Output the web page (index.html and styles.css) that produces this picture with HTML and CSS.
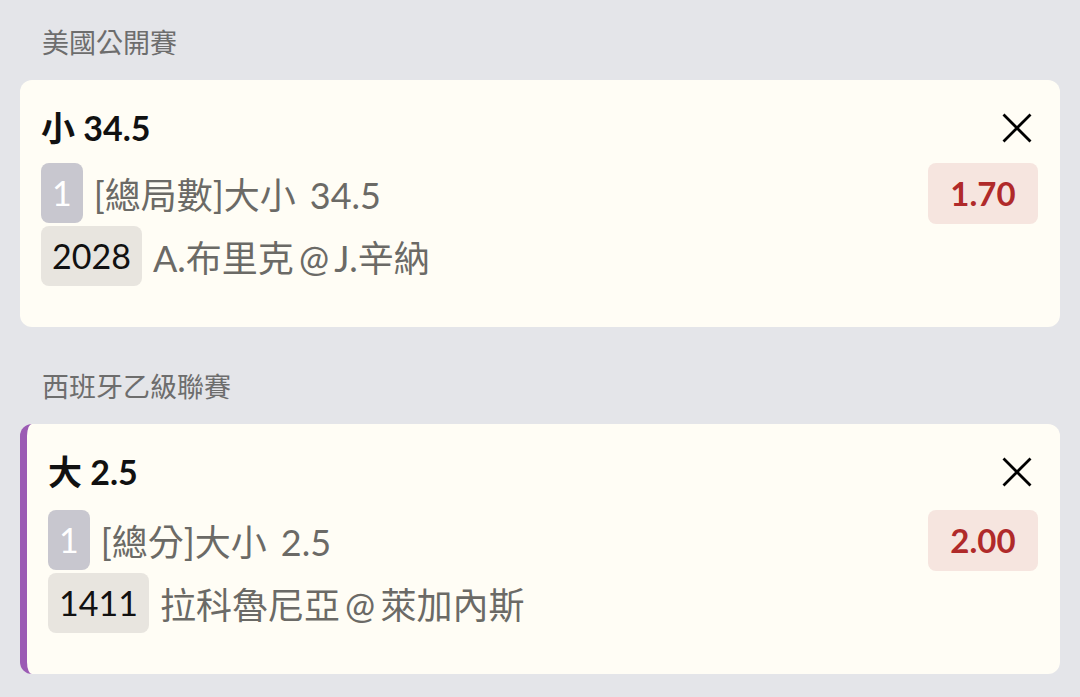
FILE: index.html
```html
<!DOCTYPE html>
<html lang="zh-Hant">
<head>
    <meta charset="UTF-8">
    <meta name="viewport" content="width=device-width, initial-scale=1.0">
    <title>投注單</title>
    <link rel="stylesheet" href="styles.css">
</head>
<body>
    <section class="league">
        <h2 class="league-name">美國公開賽</h2>
        <div class="bet-card">
            <div class="bet-head">
                <h3 class="bet-title">小 34.5</h3>
                <button class="close-button" title="移除">
                    <svg width="30" height="30" viewBox="0 0 30 30"><path d="M1.5 1.5 L28.5 28.5 M28.5 1.5 L1.5 28.5" stroke="#000" stroke-width="2.8" fill="none"/></svg>
                </button>
            </div>
            <div class="bet-body">
                <div class="bet-lines">
                    <div class="bet-line"><span class="tag tag-leg">1</span><span class="line-text">[總局數]大小<span class="line-value">34.5</span></span></div>
                    <div class="bet-line"><span class="tag tag-match">2028</span><span class="line-text">A.布里克 @ J.辛納</span></div>
                </div>
                <div class="odds">1.70</div>
            </div>
        </div>
    </section>

    <section class="league">
        <h2 class="league-name">西班牙乙級聯賽</h2>
        <div class="bet-card live">
            <div class="bet-head">
                <h3 class="bet-title">大 2.5</h3>
                <button class="close-button" title="移除">
                    <svg width="30" height="30" viewBox="0 0 30 30"><path d="M1.5 1.5 L28.5 28.5 M28.5 1.5 L1.5 28.5" stroke="#000" stroke-width="2.8" fill="none"/></svg>
                </button>
            </div>
            <div class="bet-body">
                <div class="bet-lines">
                    <div class="bet-line"><span class="tag tag-leg">1</span><span class="line-text">[總分]大小<span class="line-value">2.5</span></span></div>
                    <div class="bet-line"><span class="tag tag-match">1411</span><span class="line-text">拉科魯尼亞 @ 萊加內斯</span></div>
                </div>
                <div class="odds">2.00</div>
            </div>
        </div>
    </section>
</body>
</html>
```

FILE: styles.css
```css
/* Page */
body {
    font-family: "Lato", "Noto Sans CJK TC", sans-serif;
    background-color: #e4e5e9;
    color: #111;
    margin: 0;
    padding: 27px 20px 0;
}

/* League group */
.league + .league {
    margin-top: 44px;
}

.league-name {
    font-size: 27px;
    line-height: 32px;
    font-weight: 400;
    color: #6d6d6d;
    margin: 0 0 21px 22px;
}

/* Bet card */
.bet-card {
    background-color: #fffdf5;
    border-radius: 12px;
    padding: 28px 22px 41px 21px;
}

.bet-card.live {
    border-left: 7px solid #9b5bb4;
    padding-left: 21px;
}

.bet-head {
    display: flex;
    justify-content: space-between;
    align-items: center;
    height: 40px;
    margin-bottom: 15px;
}

.bet-card.live .bet-head {
    margin-bottom: 18px;
}

.bet-title {
    font-size: 34px;
    line-height: 40px;
    font-weight: 700;
    margin: 0;
}

.close-button {
    background: none;
    border: none;
    padding: 0;
    margin-right: 6px;
    width: 30px;
    height: 30px;
    cursor: pointer;
}

.close-button svg {
    display: block;
}

.bet-body {
    display: flex;
    justify-content: space-between;
    align-items: flex-start;
}

.bet-lines {
    display: flex;
    flex-direction: column;
    gap: 3px;
}

.bet-line {
    display: flex;
    align-items: center;
    gap: 11px;
    height: 60px;
    font-size: 34px;
}

.line-text {
    font-size: 36px;
    color: #6b6a66;
    white-space: nowrap;
    word-spacing: -4px;
}

.line-value {
    margin-left: 14px;
}

/* Small tags in front of lines */
.tag {
    height: 60px;
    line-height: 60px;
    padding: 0 11px;
    border-radius: 8px;
}

.tag-leg {
    background-color: #c8c7cf;
    color: #fff;
}

.tag-match {
    background-color: #e8e5df;
    color: #111;
}

/* Odds box */
.odds {
    width: 110px;
    height: 61px;
    line-height: 61px;
    text-align: center;
    font-size: 33px;
    font-weight: 700;
    color: #b02a2a;
    background-color: #f6e5df;
    border-radius: 8px;
}
```
